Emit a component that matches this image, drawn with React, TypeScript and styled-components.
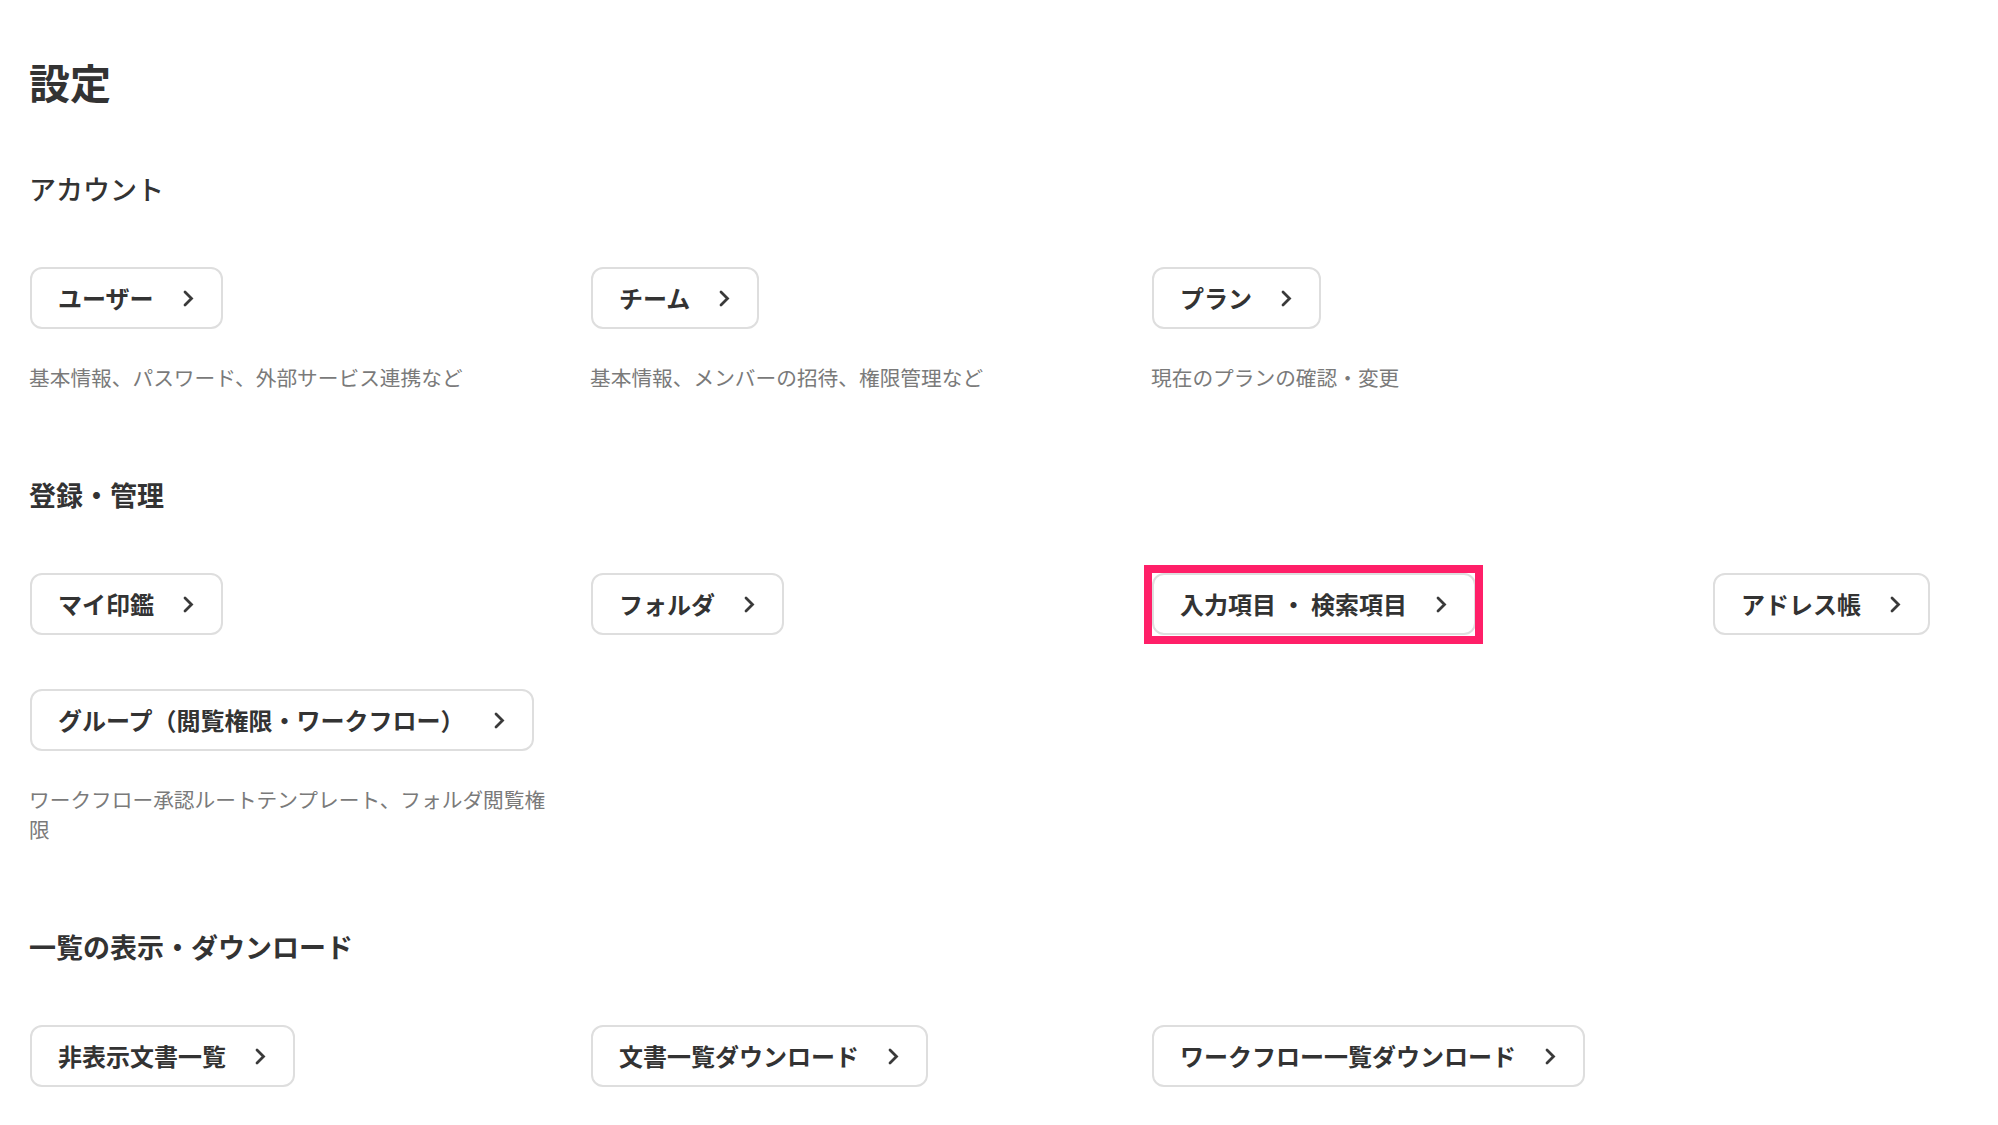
import React from 'react';
import styled, { createGlobalStyle } from 'styled-components';

const GlobalStyle = createGlobalStyle`
	html, body {
		margin: 0;
		padding: 0;
		background: #ffffff;
		overflow-x: hidden;
	}
	body {
		font-family: "Noto Sans CJK JP", "Noto Sans", sans-serif;
		color: #333333;
	}
`;

const Page = styled.main`
	display: flex;
	flex-direction: column;
	padding: 53px 0 60px 29px;
`;

const Title = styled.h1`
	margin: 0;
	font-size: 41px;
	line-height: 56px;
	font-weight: 700;
	color: #333333;
`;

const Section = styled.section`
	display: flex;
	flex-direction: column;
	margin-top: 84px;

	&:first-of-type {
		margin-top: 61px;
	}
`;

const SectionHeading = styled.h2<{ light?: boolean }>`
	margin: 0 0 59px;
	font-size: 27px;
	line-height: 38px;
	font-weight: ${({ light }) => (light ? 500 : 700)};
	color: #333333;
`;

const Grid = styled.div`
	display: grid;
	grid-template-columns: repeat(3, 530px) minmax(0, 1fr);
	column-gap: 31px;
	row-gap: 54px;
	align-items: start;
`;

const Item = styled.div`
	display: flex;
	flex-direction: column;
	align-items: flex-start;
`;

const LinkButton = styled.button<{ highlighted?: boolean }>`
	position: relative;
	display: inline-flex;
	align-items: center;
	gap: 29px;
	margin: 0 0 0 1px;
	padding: 11px 27px 11px 26px;
	border: 2px solid #dedede;
	border-radius: 12px;
	background: #ffffff;
	font-family: inherit;
	font-size: 24px;
	line-height: 36px;
	font-weight: 700;
	color: #333333;
	white-space: nowrap;
	cursor: pointer;

	&::after {
		content: '';
		display: ${({ highlighted }) => (highlighted ? 'block' : 'none')};
		position: absolute;
		top: -10px;
		right: -9px;
		bottom: -11px;
		left: -10px;
		border: 8px solid #ff1f68;
		pointer-events: none;
	}
`;

const Chevron = styled.svg`
	flex-shrink: 0;
	display: block;
`;

const Description = styled.p`
	margin: 33px 0 0;
	font-size: 20.7px;
	line-height: 30px;
	color: #7a7a7a;
	max-width: 528px;
`;

type Entry = { label: string; desc?: string; highlighted?: boolean };

const ChevronIcon = () => (
	<Chevron width="11" height="17" viewBox="0 0 11 17" aria-hidden>
		<polyline
			points="2,2 8.5,8.5 2,15"
			fill="none"
			stroke="#3a3a3a"
			strokeWidth="2.8"
			strokeLinecap="round"
			strokeLinejoin="miter"
		/>
	</Chevron>
);

const sections: { title: string; light?: boolean; items: Entry[] }[] = [
	{
		title: 'アカウント',
		light: true,
		items: [
			{ label: 'ユーザー', desc: '基本情報、パスワード、外部サービス連携など' },
			{ label: 'チーム', desc: '基本情報、メンバーの招待、権限管理など' },
			{ label: 'プラン', desc: '現在のプランの確認・変更' },
		],
	},
	{
		title: '登録・管理',
		items: [
			{ label: 'マイ印鑑' },
			{ label: 'フォルダ' },
			{ label: '入力項目 ・ 検索項目', highlighted: true },
			{ label: 'アドレス帳' },
			{
				label: 'グループ（閲覧権限・ワークフロー）',
				desc: 'ワークフロー承認ルートテンプレート、フォルダ閲覧権限',
			},
		],
	},
	{
		title: '一覧の表示・ダウンロード',
		items: [
			{ label: '非表示文書一覧' },
			{ label: '文書一覧ダウンロード' },
			{ label: 'ワークフロー一覧ダウンロード' },
		],
	},
];

export default function App() {
	return (
		<>
			<GlobalStyle />
			<Page>
				<Title>設定</Title>
				{sections.map((section) => (
					<Section key={section.title}>
						<SectionHeading light={section.light}>{section.title}</SectionHeading>
						<Grid>
							{section.items.map((item) => (
								<Item key={item.label}>
									<LinkButton type="button" highlighted={item.highlighted}>
										<span>{item.label}</span>
										<ChevronIcon />
									</LinkButton>
									{item.desc && <Description>{item.desc}</Description>}
								</Item>
							))}
						</Grid>
					</Section>
				))}
			</Page>
		</>
	);
}
